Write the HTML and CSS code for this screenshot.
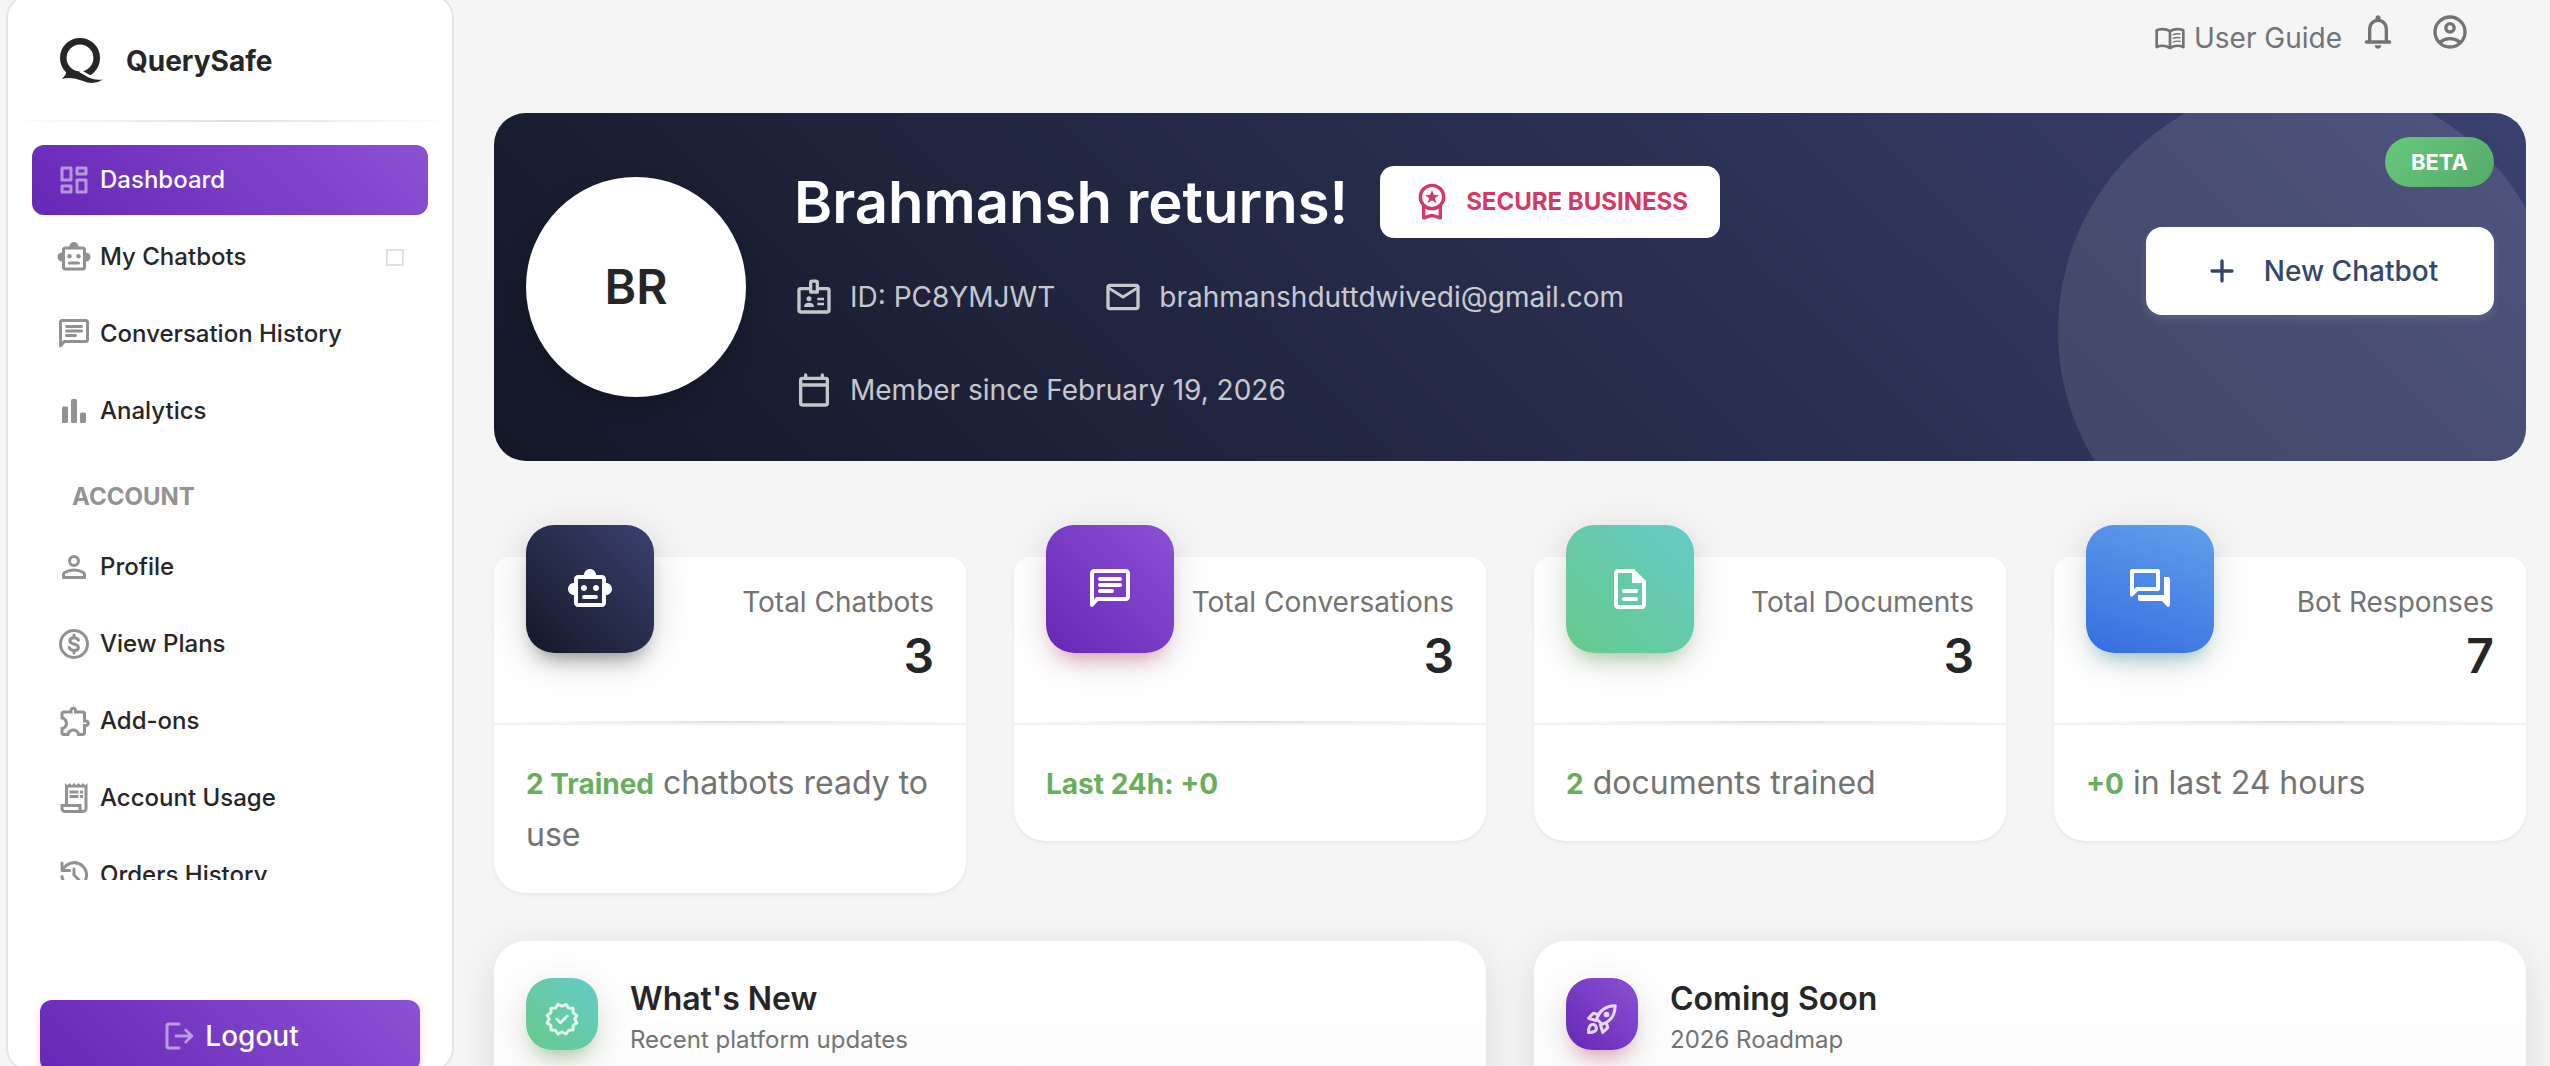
FILE: index.html
```html
<!DOCTYPE html>
<html lang="en">
<head>
    <meta charset="UTF-8">
    <meta name="viewport" content="width=device-width, initial-scale=1.0">
    <title>Dashboard - QuerySafe</title>
    <link rel="stylesheet" href="styles.css">
</head>
<body>
    <!-- Icons used more than once -->
    <svg class="sprite" aria-hidden="true">
        <symbol id="icon-bot" viewBox="0 0 24 24"><path d="M20 9V7c0-1.1-.9-2-2-2h-3c0-1.66-1.34-3-3-3S9 3.34 9 5H6c-1.1 0-2 .9-2 2v2c-1.66 0-3 1.34-3 3s1.34 3 3 3v4c0 1.1.9 2 2 2h12c1.1 0 2-.9 2-2v-4c1.66 0 3-1.34 3-3s-1.34-3-3-3zm-2 10H6V7h12v12zm-9-6c-.83 0-1.5-.67-1.5-1.5S8.17 10 9 10s1.5.67 1.5 1.5S9.83 13 9 13zm7.5-1.5c0 .83-.67 1.5-1.5 1.5s-1.5-.67-1.5-1.5.67-1.5 1.5-1.5 1.5.67 1.5 1.5zM9 15h6a1 1 0 0 1 0 2H9a1 1 0 0 1 0-2z"/></symbol>
        <symbol id="icon-chat" viewBox="0 0 24 24"><path d="M4 4h16v12H5.17L4 17.17V4m0-2c-1.1 0-2 .9-2 2v16c0 .9 1 1.2 1.7.6L6 18h14c1.1 0 2-.9 2-2V4c0-1.1-.9-2-2-2H4z"/><path class="line" d="M7 7h10M7 10h10M7 13h6"/></symbol>
    </svg>

    <div class="wrapper">
        <!-- Sidebar -->
        <aside class="sidebar">
            <div class="brand">
                <svg class="logo" viewBox="0 0 44 46"><circle class="ring" cx="20" cy="20" r="16.7"/><path class="cut" d="M20 33Q26 37 35 41"/><path d="M2 41Q6 37 7 33Q15 31 23 36.500Q33 43 43 41.500Q34 47.500 23 43Q11 38 2 41z"/></svg>
                <span>QuerySafe</span>
            </div>
            <hr>
            <nav>
                <a class="active" href="#"><svg class="icon" viewBox="0 0 24 24"><path d="M19 5v2h-4V5h4M9 5v6H5V5h4m10 8v6h-4v-6h4M9 17v2H5v-2h4M20 3h-6a1 1 0 0 0-1 1v4a1 1 0 0 0 1 1h6a1 1 0 0 0 1-1V4a1 1 0 0 0-1-1zM10 3H4a1 1 0 0 0-1 1v8a1 1 0 0 0 1 1h6a1 1 0 0 0 1-1V4a1 1 0 0 0-1-1zm10 8h-6a1 1 0 0 0-1 1v8a1 1 0 0 0 1 1h6a1 1 0 0 0 1-1v-8a1 1 0 0 0-1-1zm-10 4H4a1 1 0 0 0-1 1v4a1 1 0 0 0 1 1h6a1 1 0 0 0 1-1v-4a1 1 0 0 0-1-1z"/></svg>Dashboard</a>
                <a href="#"><svg class="icon"><use href="#icon-bot"/></svg>My Chatbots<span class="marker"></span></a>
                <a href="#"><svg class="icon"><use href="#icon-chat"/></svg>Conversation History</a>
                <a href="#"><svg class="icon" viewBox="0 0 24 24"><rect x="4" y="9" width="4" height="11" rx="1"/><rect x="10" y="4" width="4" height="16" rx="1"/><rect x="16" y="13" width="4" height="7" rx="1"/></svg>Analytics</a>
                <h6>ACCOUNT</h6>
                <a href="#"><svg class="icon" viewBox="0 0 24 24"><path class="line" d="M5 19v-2q0-.8.8-1.3Q8.6 14 12 14t6.2 1.7Q19 16.2 19 17v2z"/><circle class="line" cx="12" cy="8" r="3"/></svg>Profile</a>
                <a href="#"><svg class="icon" viewBox="0 0 24 24"><circle class="line" cx="12" cy="12" r="9"/><path class="line" d="M15 9.5Q14.200 7.8 12 7.8q-2.800 0-2.800 2 0 1.500 2.800 2.200t2.900 2.300q0 2-2.900 2-2.400 0-3.200-2M12 6v1.500M12 16.500V18"/></svg>View Plans</a>
                <a href="#"><svg class="icon" viewBox="0 0 24 24"><path transform="translate(1)" d="M10.5 4.5c.28 0 .5.22.5.5v2h6v6h2c.28 0 .5.22.5.5s-.22.5-.5.5h-2v6h-2.120c-.68-1.750-2.390-3-4.380-3s-3.700 1.250-4.380 3H4v-2.120c1.750-.68 3-2.390 3-4.380 0-1.990-1.240-3.700-2.990-4.380L4 7h6V5c0-.28.22-.5.5-.5m0-2C9.120 2.500 8 3.620 8 5H4c-1.100 0-1.990.9-1.990 2v3.800h.29c1.490 0 2.700 1.210 2.700 2.700s-1.210 2.700-2.700 2.700H2V20c0 1.100.9 2 2 2h3.800v-.3c0-1.490 1.210-2.700 2.700-2.700s2.700 1.210 2.700 2.700v.3H17c1.100 0 2-.9 2-2v-4c1.380 0 2.500-1.120 2.500-2.500S20.380 11 19 11V7c0-1.100-.9-2-2-2h-4c0-1.380-1.120-2.500-2.500-2.500z"/></svg>Add-ons</a>
                <a href="#"><svg class="icon" viewBox="0 0 24 24"><path d="M19.5 3.5L18 2l-1.500 1.500L15 2l-1.500 1.500L12 2l-1.500 1.500L9 2 7.500 3.500 6 2v14H3v3c0 1.660 1.340 3 3 3h12c1.660 0 3-1.340 3-3V2l-1.500 1.500zM15 20H6c-.55 0-1-.45-1-1v-1h10v2zm4-1c0 .55-.45 1-1 1s-1-.45-1-1v-3H8V5h11v14zM9 7h6v2H9zM16 7h2v2h-2zM9 10h6v2H9zM16 10h2v2h-2z"/></svg>Account Usage</a>
                <a href="#"><svg class="icon" viewBox="0 0 24 24"><path class="line" d="M4 4v5h5M4.500 9A8.200 8.200 0 1 1 4 13M12 8v4l3 3"/></svg>Orders History</a>
            </nav>
            <div class="sidebar-footer">
                <button class="logout" type="button"><svg class="icon" viewBox="0 0 24 24"><path class="line" d="M12 4H5a1 1 0 0 0-1 1v14a1 1 0 0 0 1 1h7M10 12h10M16.500 8l4 4-4 4"/></svg>Logout</button>
            </div>
        </aside>

        <main>
            <!-- Top bar -->
            <header>
                <a class="guide" href="#"><svg viewBox="0 0 24 24"><path class="line" d="M12 6.800Q9.500 5.300 6.500 5.300T2 6.300v12.500q2-1 4.500-1t5.500 1.700q3-1.700 5.500-1.700t4.500 1V6.300q-1.500-1-4.500-1T12 6.800zM12 6.800v12.500"/><path class="thin" d="M14.500 9.500q2.500-1 5-.5M14.500 12.300q2.500-1 5-.5M14.500 15q2.500-1 5-.5"/></svg>User Guide</a>
                <button class="icon-button" type="button" aria-label="Notifications"><svg viewBox="0 0 24 24"><path d="M5 19a1 1 0 0 1 0-2h1v-7q0-2.075 1.250-3.688T10.500 4.200v-.7q0-.625.438-1.062T12 2t1.063.438T13.500 3.500v.7q2 .5 3.250 2.113T18 10v7h1a1 1 0 0 1 0 2zm7 3q-.825 0-1.412-.587T10 20h4q0 .825-.587 1.413T12 22m-4-5h8v-7q0-1.650-1.175-2.825T12 6T9.175 7.175T8 10z"/></svg></button>
                <button class="icon-button" type="button" aria-label="Account"><svg viewBox="0 0 24 24"><circle class="line" cx="12" cy="12" r="9"/><circle class="line" cx="12" cy="9.500" r="2.500"/><path class="line" d="M6 18.200Q8.700 16 12 16t6 2.200"/></svg></button>
            </header>

            <!-- Welcome banner -->
            <section class="banner">
                <div class="avatar">BR</div>
                <div class="welcome">
                    <div class="title-row">
                        <h1>Brahmansh returns!</h1>
                        <span class="plan"><svg viewBox="0 0 24 24"><circle class="line" cx="12" cy="9" r="7"/><path class="line" d="M7 14.500V21.500l5-1.500 5 1.500v-7"/><path d="M12 4.800l1.100 2.900 3 .1-2.400 1.900.9 3-2.600-1.700-2.600 1.700.9-3-2.400-1.900 3-.1z"/></svg>SECURE BUSINESS</span>
                    </div>
                    <ul class="info">
                        <li><svg viewBox="0 0 24 24"><path class="line" d="M10 7H4a1 1 0 0 0-1 1v12a1 1 0 0 0 1 1h16a1 1 0 0 0 1-1V8a1 1 0 0 0-1-1h-6M10 3.500a1 1 0 0 1 1-1h2a1 1 0 0 1 1 1V9h-4z"/><circle cx="9" cy="13" r="1.500"/><path d="M6 18q0-2.500 3-2.500t3 2.500zM14 12.500h4V14h-4zM14 15.500h4V17h-4z"/></svg>ID: PC8YMJWT</li>
                        <li><svg viewBox="0 0 24 24"><path d="M22 6c0-1.100-.9-2-2-2H4c-1.100 0-2 .9-2 2v12c0 1.100.9 2 2 2h16c1.100 0 2-.9 2-2V6zm-2 0l-8 5-8-5h16zm0 12H4V8l8 5 8-5v10z"/></svg>brahmanshduttdwivedi@gmail.com</li>
                        <li><svg viewBox="0 0 24 24"><path class="line" d="M4 9h16M5 5h14a1 1 0 0 1 1 1v14a1 1 0 0 1-1 1H5a1 1 0 0 1-1-1V6a1 1 0 0 1 1-1zM7 3v2M17 3v2"/></svg>Member since February 19, 2026</li>
                    </ul>
                </div>
                <div class="actions">
                    <button class="new-chatbot" type="button"><svg viewBox="0 0 24 24"><path class="line" d="M12 6v12M6 12h12"/></svg>New Chatbot</button>
                </div>
                <span class="beta">BETA</span>
            </section>

            <!-- Stat cards -->
            <section class="stats">
                <div class="card">
                    <div class="card-icon dark"><svg><use href="#icon-bot"/></svg></div>
                    <div class="card-head">
                        <p>Total Chatbots</p>
                        <h4>3</h4>
                    </div>
                    <hr>
                    <p class="card-foot"><b>2 Trained</b> chatbots ready to use</p>
                </div>
                <div class="card">
                    <div class="card-icon purple"><svg><use href="#icon-chat"/></svg></div>
                    <div class="card-head">
                        <p>Total Conversations</p>
                        <h4>3</h4>
                    </div>
                    <hr>
                    <p class="card-foot"><b>Last 24h: +0</b></p>
                </div>
                <div class="card">
                    <div class="card-icon green"><svg viewBox="0 0 24 24"><path d="M14 2H6c-1.100 0-2 .9-2 2v16c0 1.100.9 2 2 2h12c1.100 0 2-.9 2-2V8l-6-6zm4 18H6V4h7v5h5v11z"/><path class="line" d="M9 13h6M9 17h6"/></svg></div>
                    <div class="card-head">
                        <p>Total Documents</p>
                        <h4>3</h4>
                    </div>
                    <hr>
                    <p class="card-foot"><b>2</b> documents trained</p>
                </div>
                <div class="card">
                    <div class="card-icon blue"><svg viewBox="0 0 24 24"><path d="M15 4v7H5.170L4 12.170V4h11m1-2H3c-.55 0-1 .45-1 1v12c0 .7.8 1 1.300.6L6 13h10c.55 0 1-.45 1-1V3c0-.55-.45-1-1-1zm5 4h-2v9H6v2c0 .55.45 1 1 1h11l2.400 2.600c.6.6 1.600.3 1.600-.6V7c0-.55-.45-1-1-1z"/></svg></div>
                    <div class="card-head">
                        <p>Bot Responses</p>
                        <h4>7</h4>
                    </div>
                    <hr>
                    <p class="card-foot"><b>+0</b> in last 24 hours</p>
                </div>
            </section>

            <!-- News and roadmap -->
            <section class="panels">
                <div class="panel">
                    <div class="panel-icon green"><svg viewBox="0 0 24 24"><path class="line" d="M12 3.500l2.700-1.300 1.700 2.500 3 .2v3l2.500 1.700L20.500 12l1.400 2.600-2.500 1.700v3l-3 .2-1.700 2.500L12 20.600l-2.700 1.400-1.700-2.500-3-.2v-3l-2.500-1.700L3.500 12 2.100 9.600l2.500-1.700v-3l3-.2 1.700-2.500z"/><path class="line" d="M8.500 12l2.500 2.500 4.500-4.500"/></svg></div>
                    <div>
                        <h5>What's New</h5>
                        <p>Recent platform updates</p>
                    </div>
                </div>
                <div class="panel">
                    <div class="panel-icon purple"><svg viewBox="0 0 24 24"><path class="line" d="M8.500 12Q11 3.500 20.800 3.200 20.500 13 12 15.500zM9.500 9l-3.300-.8L3 11.500l5 1.500M15 14.500l.8 3.300-3.300 3.200L11 16M3 21q0-5 2.500-5.300T8.300 18.500Q8 21 3 21z"/><circle cx="15" cy="9" r="1.900"/></svg></div>
                    <div>
                        <h5>Coming Soon</h5>
                        <p>2026 Roadmap</p>
                    </div>
                </div>
            </section>
        </main>
    </div>
</body>
</html>
```

FILE: styles.css
```css
/* Global styles */
* {
    box-sizing: border-box;
}
body {
    font-family: Inter, "Liberation Sans", sans-serif;
    font-size: 28px;
    line-height: 42px;
    color: #737373;
    margin: 0;
    background-color: #f5f5f5;
}
h1, h4, h5, h6, p, ul {
    margin: 0;
    padding: 0;
}
h1, h4, h5 {
    color: #262626;
    font-weight: 600;
}
a {
    color: inherit;
    text-decoration: none;
}
button {
    font: inherit;
    border: none;
    cursor: pointer;
}
hr {
    height: 2px;
    margin: 0;
    border: none;
    background: linear-gradient(90deg, transparent, #e0e0e0, transparent);
}
svg {
    fill: currentColor;
    flex-shrink: 0;
}
.sprite {
    display: none;
}
.line, .thin {
    fill: none;
    stroke: currentColor;
    stroke-width: 2;
    stroke-linecap: round;
    stroke-linejoin: round;
}
.thin {
    stroke-width: 1;
}

/* Gradients with their matching glow */
.dark {
    background: linear-gradient(45deg, #141727, #3a416f);
    box-shadow: 0 8px 40px rgba(0, 0, 0, 0.14), 0 14px 20px -10px rgba(0, 0, 0, 0.4);
}
.purple {
    background: linear-gradient(45deg, #6727b6, #8b51d4);
    box-shadow: 0 8px 40px rgba(0, 0, 0, 0.12), 0 14px 20px -10px rgba(216, 27, 96, 0.4);
}
.green {
    background: linear-gradient(45deg, #66cb8a, #66cacb);
    box-shadow: 0 8px 40px rgba(0, 0, 0, 0.12), 0 14px 20px -10px rgba(76, 155, 50, 0.4);
}
.blue {
    background: linear-gradient(20deg, #376de0, #60a0ea);
    box-shadow: 0 8px 40px rgba(0, 0, 0, 0.12), 0 14px 20px -10px rgba(0, 140, 150, 0.4);
}

/* Layout styles */
.wrapper {
    display: flex;
    height: 100vh;
    overflow: hidden;
}
.sidebar {
    width: 448px;
    height: calc(100vh + 12px);
    flex-shrink: 0;
    margin: -6px 40px 0 6px;
    display: flex;
    flex-direction: column;
    background-color: #fff;
    border: 2px solid #e5e5e5;
    border-radius: 24px;
}
main {
    flex: 1;
    min-width: 0;
    padding-right: 24px;
}

/* Sidebar styles */
.brand {
    display: flex;
    align-items: center;
    gap: 22px;
    height: 124px;
    padding: 6px 52px 0;
    color: #262626;
    font-weight: 700;
}
.logo {
    width: 44px;
    height: 46px;
}
.ring {
    fill: none;
    stroke: currentColor;
    stroke-width: 6.6;
}
.cut {
    fill: none;
    stroke: #fff;
    stroke-width: 3;
}
nav {
    flex: 1;
    min-height: 0;
    overflow: hidden;
    padding: 23px 24px 0;
}
nav a {
    display: flex;
    align-items: center;
    gap: 8px;
    height: 70px;
    margin-bottom: 7px;
    padding: 0 24px;
    border-radius: 12px;
    color: #262626;
    font-size: 24px;
    font-weight: 500;
}
nav h6 {
    height: 79px;
    padding: 9px 40px;
    font-size: 24px;
    font-weight: 700;
    line-height: 70px;
    color: #939393;
}
nav .active {
    color: #fff;
    background: linear-gradient(45deg, #6727b6, #8b51d4);
}
.icon {
    width: 36px;
    height: 36px;
    opacity: 0.5;
}
.marker {
    width: 18px;
    height: 17px;
    margin-left: auto;
    border: 2px solid #dee2e6;
}
.sidebar-footer {
    padding: 120px 32px 0;
    height: 190px;
}
.logout {
    display: flex;
    align-items: center;
    justify-content: center;
    gap: 8px;
    width: 100%;
    height: 72px;
    border-radius: 12px;
    color: #fff;
    font-weight: 500;
    background: linear-gradient(45deg, #6727b6, #8b51d4);
    box-shadow: 0 4px 8px rgba(216, 27, 96, 0.2);
}

/* Top bar styles */
header {
    display: flex;
    justify-content: flex-end;
    height: 113px;
    padding: 12px 56px 0 0;
}
.guide {
    display: flex;
    align-items: center;
    gap: 8px;
    height: 52px;
    margin-right: 16px;
}
.guide svg {
    width: 32px;
    height: 32px;
}
.icon-button {
    width: 40px;
    height: 40px;
    padding: 0;
    color: inherit;
    background: none;
}
.icon-button + .icon-button {
    margin-left: 32px;
}

/* Banner styles */
.banner {
    position: relative;
    display: flex;
    align-items: center;
    gap: 48px;
    padding: 49px 32px;
    overflow: hidden;
    border-radius: 32px;
    color: #fff;
    background: linear-gradient(45deg, #141727, #3a416f);
}
.banner::after {
    content: "";
    position: absolute;
    top: -32px;
    right: -32px;
    width: 500px;
    height: 500px;
    border-radius: 50%;
    background-color: rgba(255, 255, 255, 0.1);
}
.avatar {
    display: flex;
    align-items: center;
    justify-content: center;
    width: 220px;
    height: 220px;
    flex-shrink: 0;
    border-radius: 50%;
    color: #262626;
    background-color: #fff;
    font-size: 48px;
    font-weight: 600;
    box-shadow: 0 8px 24px rgba(0, 0, 0, 0.2);
}
.welcome {
    flex: 1;
    padding-top: 4px;
}
.title-row {
    display: flex;
    align-items: center;
    gap: 32px;
    margin-bottom: 36px;
}
h1 {
    color: #fff;
    font-size: 58px;
    line-height: 72px;
}
.plan {
    display: flex;
    align-items: center;
    gap: 14px;
    height: 72px;
    padding: 0 32px;
    border-radius: 14px;
    color: #d63864;
    background-color: #fff;
    font-size: 24px;
    font-weight: 700;
}
.plan svg {
    width: 40px;
    height: 40px;
}
.info {
    display: flex;
    flex-wrap: wrap;
    gap: 48px;
    list-style: none;
    color: rgba(255, 255, 255, 0.75);
}
.info li {
    display: flex;
    align-items: center;
    gap: 16px;
    height: 45px;
}
.info svg {
    width: 40px;
    height: 40px;
}
.actions {
    position: relative;
    z-index: 1;
    align-self: flex-start;
    padding-top: 65px;
}
.new-chatbot {
    display: flex;
    align-items: center;
    justify-content: center;
    gap: 22px;
    width: 348px;
    height: 88px;
    border-radius: 16px;
    color: #344767;
    background-color: #fff;
    font-weight: 500;
    box-shadow: 0 4px 8px rgba(255, 255, 255, 0.12);
}
.new-chatbot svg {
    width: 40px;
    height: 40px;
}
.beta {
    position: absolute;
    z-index: 1;
    top: 24px;
    right: 32px;
    padding: 4px 26px;
    border-radius: 25px;
    background: linear-gradient(135deg, #66c97b, #56a96a);
    font-size: 22px;
    font-weight: 700;
}

/* Stat card styles */
.stats {
    display: grid;
    grid-template-columns: repeat(4, 1fr);
    align-items: start;
    gap: 48px;
    margin-top: 96px;
}
.card {
    position: relative;
    border-radius: 16px 16px 32px 32px;
    background-color: #fff;
    box-shadow: 0 2px 4px rgba(0, 0, 0, 0.06);
}
.card-icon {
    position: absolute;
    top: -32px;
    left: 32px;
    display: flex;
    align-items: center;
    justify-content: center;
    width: 128px;
    height: 128px;
    border-radius: 28px;
    color: #fff;
}
.card-icon svg {
    width: 48px;
    height: 48px;
}
.card-head {
    position: relative;
    padding: 24px 32px 32px;
    text-align: right;
}
.card-head h4 {
    font-size: 48px;
    line-height: 66px;
}
.card-foot {
    padding: 32px;
    border-top: 2px solid #f0f2f5;
    font-size: 32px;
    line-height: 52px;
}
.card-foot b {
    color: #67ae5d;
    font-size: 28px;
    line-height: 28px;
}

/* Panel styles */
.panels {
    display: grid;
    grid-template-columns: 1fr 1fr;
    gap: 48px;
    margin-top: 48px;
}
.panel {
    display: flex;
    gap: 32px;
    min-height: 300px;
    padding: 37px 32px;
    border-radius: 32px;
    background: linear-gradient(#fff 20%, #f5f5f5);
    box-shadow: 0 8px 40px rgba(0, 0, 0, 0.1);
}
.panel-icon {
    display: flex;
    justify-content: center;
    width: 72px;
    height: 72px;
    padding-top: 23px;
    border-radius: 26px;
    color: rgba(255, 255, 255, 0.8);
}
.panel-icon svg {
    width: 36px;
    height: 36px;
}
h5 {
    font-size: 32px;
    line-height: 42px;
}
.panel p {
    font-size: 24px;
    line-height: 39px;
}
```
